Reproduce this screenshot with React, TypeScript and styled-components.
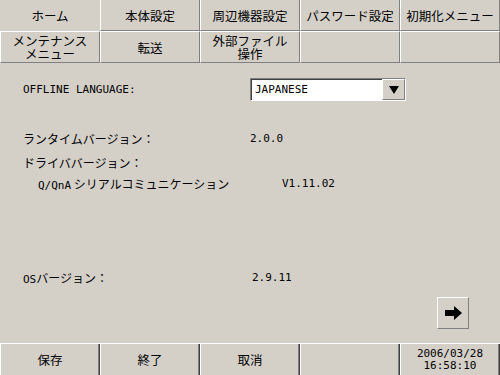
import React from "react";
import styled, { createGlobalStyle } from "styled-components";

const GlobalStyle = createGlobalStyle`
  html, body {
    margin: 0;
    padding: 0;
    background: #d4d0c8;
  }
`;

const jp = `"Noto Sans CJK JP", "DejaVu Sans", sans-serif`;
const mono = `"DejaVu Sans Mono", "Liberation Mono", monospace`;

const topTabs = ["ホーム", "本体設定", "周辺機器設定", "パスワード設定", "初期化メニュー"];
const subTabs = [["メンテナンス", "メニュー"], ["転送"], ["外部ファイル", "操作"], [], []];
const footerButtons = ["保存", "終了", "取消", ""];

export default function App() {
  return (
    <Screen>
      <GlobalStyle />
      <TabRow $height={31}>
        {topTabs.map((t, i) => (
          <Tab key={t} $active={i === 0} $top={false}>
            {t}
          </Tab>
        ))}
      </TabRow>
      <TabRow $height={32}>
        {subTabs.map((lines, i) => (
          <Tab key={i} $active={false} $top>
            {lines.map((l) => (
              <TabLine key={l}>{l}</TabLine>
            ))}
          </Tab>
        ))}
      </TabRow>

      <Content>
        <LanguageRow>
          <LangLabel>OFFLINE LANGUAGE:</LangLabel>
          <Select>
            <SelectValue>JAPANESE</SelectValue>
            <SelectButton>
              <svg width="10" height="8" viewBox="0 0 10 8">
                <polygon points="0,0 10,0 5,8" fill="#000" />
              </svg>
            </SelectButton>
          </Select>
        </LanguageRow>

        <InfoRow $gap={27}>
          <Label $width={227}>ランタイムバージョン：</Label>
          <Value>2.0.0</Value>
        </InfoRow>
        <InfoRow $gap={4}>
          <Label $width={227}>ドライババージョン：</Label>
        </InfoRow>
        <InfoRow $gap={1} $indent={15}>
          <Label $width={244}>
            <Mono>Q/QnA</Mono> シリアルコミュニケーション
          </Label>
          <Value>V1.11.02</Value>
        </InfoRow>
        <InfoRow $gap={74}>
          <Label $width={229}>
            <Mono>OS</Mono>バージョン：
          </Label>
          <Value>2.9.11</Value>
        </InfoRow>

        <NextRow>
          <NextButton>
            <svg width="17" height="14" viewBox="0 0 17 14">
              <polygon points="0,4 9,4 9,0 17,7 9,14 9,10 0,10" fill="#000" />
            </svg>
          </NextButton>
        </NextRow>
      </Content>

      <Footer>
        {footerButtons.map((b, i) => (
          <FooterButton key={i}>{b}</FooterButton>
        ))}
        <FooterButton>
          <Clock>
            <span>2006/03/28</span>
            <span>16:58:10</span>
          </Clock>
        </FooterButton>
      </Footer>
    </Screen>
  );
}

const Screen = styled.div`
  width: 500px;
  height: 375px;
  display: flex;
  flex-direction: column;
  background: #d4d0c8;
  color: #000;
  font-family: ${jp};
  overflow: hidden;
`;

const TabRow = styled.div<{ $height: number }>`
  display: grid;
  grid-template-columns: repeat(5, 100px);
  height: ${(p) => p.$height}px;
`;

const Tab = styled.div<{ $active: boolean; $top: boolean }>`
  box-sizing: border-box;
  display: flex;
  flex-direction: column;
  align-items: center;
  justify-content: center;
  font-size: 12.5px;
  line-height: 14px;
  border-left: 1px solid ${(p) => (p.$active ? "transparent" : "#ffffff")};
  border-right: 1px solid ${(p) => (p.$active ? "transparent" : "#808080")};
  border-top: ${(p) => (p.$top ? "1px solid #ffffff" : "none")};
  border-bottom: 1px solid ${(p) => (p.$active ? "transparent" : "#808080")};
  padding-top: ${(p) => (p.$top ? "0" : "1px")};
`;

const TabLine = styled.span`
  display: block;
  height: 13px;
  line-height: 13px;
  overflow: visible;
  white-space: nowrap;
`;

const Content = styled.div`
  flex: 1;
  display: flex;
  flex-direction: column;
  padding: 15px 0 0 23px;
`;

const LanguageRow = styled.div`
  display: flex;
  align-items: center;
  height: 23px;
`;

const LangLabel = styled.span`
  width: 227px;
  font-family: ${mono};
  font-size: 11px;
`;

const Select = styled.div`
  box-sizing: border-box;
  width: 156px;
  height: 23px;
  display: flex;
  background: #fff;
  border-top: 1px solid #808080;
  border-left: 1px solid #808080;
  border-right: 1px solid #ffffff;
  border-bottom: 1px solid #ffffff;
  box-shadow: inset 1px 1px 0 #404040;
`;

const SelectValue = styled.span`
  flex: 1;
  display: flex;
  align-items: center;
  padding-left: 4px;
  font-family: ${mono};
  font-size: 11px;
`;

const SelectButton = styled.span`
  box-sizing: border-box;
  width: 23px;
  display: flex;
  align-items: center;
  justify-content: center;
  background: #d4d0c8;
  border-top: 1px solid #ffffff;
  border-left: 1px solid #ffffff;
  border-right: 1px solid #808080;
  border-bottom: 1px solid #808080;
`;

const InfoRow = styled.div<{ $gap: number; $indent?: number }>`
  display: flex;
  align-items: center;
  height: 20px;
  margin-top: ${(p) => p.$gap}px;
  padding-left: ${(p) => p.$indent ?? 0}px;
`;

const Label = styled.span<{ $width: number }>`
  width: ${(p) => p.$width}px;
  font-size: 12px;
  white-space: nowrap;
`;

const Mono = styled.span`
  font-family: ${mono};
  font-size: 11px;
`;

const Value = styled.span`
  font-family: ${mono};
  font-size: 11px;
`;

const NextRow = styled.div`
  display: flex;
  justify-content: flex-end;
  margin-top: 10px;
  padding-right: 31px;
`;

const NextButton = styled.div`
  box-sizing: border-box;
  width: 32px;
  height: 32px;
  display: flex;
  align-items: center;
  justify-content: center;
  border-top: 1px solid #ffffff;
  border-left: 1px solid #ffffff;
  border-right: 1px solid #808080;
  border-bottom: 1px solid #808080;
`;

const Footer = styled.div`
  display: grid;
  grid-template-columns: repeat(5, 100px);
  height: 32px;
  border-top: 1px solid #ffffff;
  box-sizing: border-box;
`;

const FooterButton = styled.div`
  box-sizing: border-box;
  display: flex;
  align-items: center;
  justify-content: center;
  font-size: 12.5px;
  border-left: 1px solid #ffffff;
  border-right: 1px solid #404040;
  box-shadow: inset -1px 0 0 #808080;
`;

const Clock = styled.span`
  display: flex;
  flex-direction: column;
  align-items: center;
  font-family: ${mono};
  font-size: 11px;
  line-height: 12px;
`;
